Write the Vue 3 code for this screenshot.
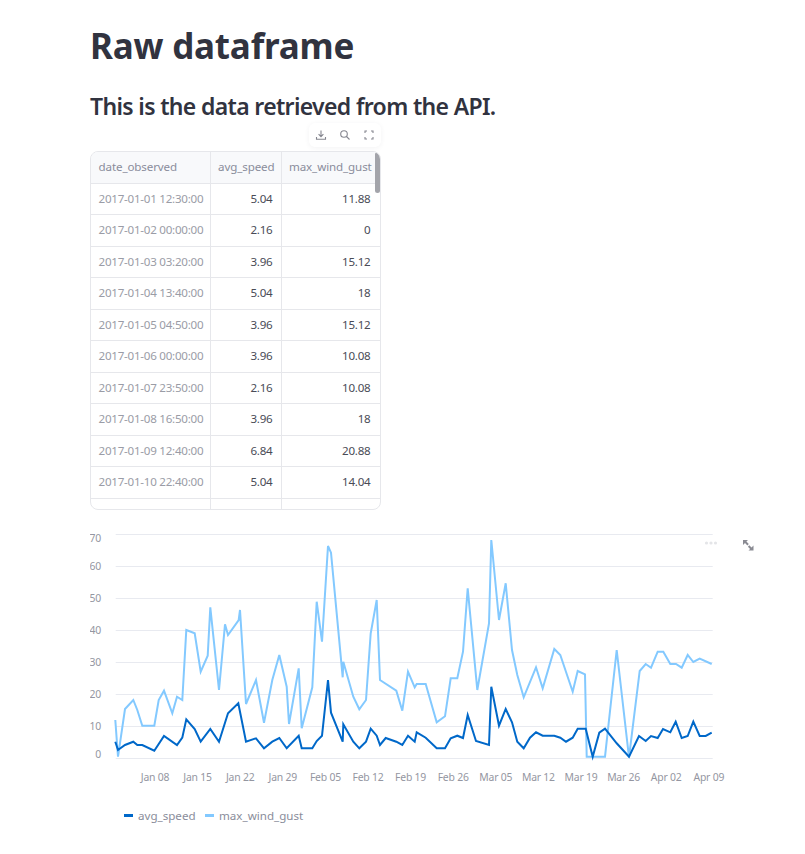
<script setup>
const rows = [
  ['2017-01-01 12:30:00', '5.04', '11.88'],
  ['2017-01-02 00:00:00', '2.16', '0'],
  ['2017-01-03 03:20:00', '3.96', '15.12'],
  ['2017-01-04 13:40:00', '5.04', '18'],
  ['2017-01-05 04:50:00', '3.96', '15.12'],
  ['2017-01-06 00:00:00', '3.96', '10.08'],
  ['2017-01-07 23:50:00', '2.16', '10.08'],
  ['2017-01-08 16:50:00', '3.96', '18'],
  ['2017-01-09 12:40:00', '6.84', '20.88'],
  ['2017-01-10 22:40:00', '5.04', '14.04'],
  ['', '', ''],
]

const yTicks = [70, 60, 50, 40, 30, 20, 10, 0]
const xTicks = ['Jan 08', 'Jan 15', 'Jan 22', 'Jan 29', 'Feb 05', 'Feb 12', 'Feb 19', 'Feb 26', 'Mar 05', 'Mar 12', 'Mar 19', 'Mar 26', 'Apr 02', 'Apr 09']

function gridY(v) {
  return 758 - v * 3.2
}

// first and last y labels are pulled inside the plot, as vega does
function labelY(v) {
  if (v === 70) return 542
  if (v === 0) return 757.5
  return gridY(v) + 4
}

// traced from the plot, in page pixels
const gust = '115.3,720 118,756.7 125,709 133.3,700 137.3,710 142.3,725.7 154.3,725.7 158.7,700 164,690.7 172.3,713.3 177,696.7 182.3,700 186.3,630 194.7,633.3 200.7,671.7 207.7,655.7 210.3,607.3 219,690 225,624.3 228,635 238.7,620 240,610 246,704 256,680 264,722.7 272.3,680 279.3,655 286.7,686.7 289,724 298.7,668.3 301.7,728.3 312.3,687.3 316.7,601.7 322,641.7 328,546 331,552.7 342.7,677.3 343.3,661.7 353.3,696.7 359.3,709.3 366,700 370.7,633.3 376.7,600 380,680 396.3,690.7 402.3,710.7 408,671.7 414.7,687.3 416.7,684 425.7,684 436.7,722.3 445,716.3 450.7,678.3 457.3,678.3 463,651.7 467.7,588.3 477.3,690 489,623.3 491.3,540 499,620 505.7,583.3 512,650 517.3,675 523.7,697.3 536,667.3 542.7,688.3 554.3,649 560.3,655 572.7,691.7 577.7,671 585,674.3 586.7,756.7 605,756.7 616.7,650 629,757.3 639.7,671 645.7,664 651,667.7 657.7,651.7 663.3,651.7 670.3,664 676,664 681.7,667.7 687.7,655 693.3,662 699.7,658.7 711.7,664'
const speed = '115.3,741.7 118,750 125,745 133.3,741.7 137.3,745 142.3,745 154.3,750.7 164,736 177,745 182.3,737.7 186.3,719.3 194.7,729 200.7,741.7 210.3,729 219,741.7 228,713.3 238.3,703.3 246,741.7 256,738.3 264,748.3 272.3,741.7 279.3,738 286.7,748.3 298.7,735.7 301.7,748.3 312.3,748.3 316.7,741 322,735.7 328,680 331,712.7 342.7,741.7 343.3,724.3 353.3,741.7 359.3,748.3 366,741.7 370.7,728.7 376.7,735.7 380,745 385.7,738 396.3,741.7 402.3,745 408,735.7 414.7,741.7 416.7,732.3 425.7,737.7 436.7,748.3 445,748.3 450.7,738.3 457.3,735.7 463,738 467.7,715 476,741 489,745 491.3,686.7 499,725.7 505.7,709 512,722.3 517.3,741.7 523.7,748.3 530,737.7 536,732.3 542.7,735.7 554.3,735.7 560.3,737.7 566,741.7 572.7,737.7 577.7,728.7 585.7,728.7 592.7,756.7 599.3,732.7 605,728.7 616.7,743.3 629,756.7 639,736 645.7,741 651,736 657.7,738 663,729 670.3,732.3 675.7,721.7 681.7,738 687.7,736 693.3,721.7 699.7,736 705.7,736 711.7,732.7'
</script>

<template>
  <div class="page">
    <h1 class="title">Raw dataframe</h1>
    <h2 class="subtitle">This is the data retrieved from the API.</h2>

    <div class="df">
      <div class="df-toolbar">
        <svg class="df-icon" viewBox="0 0 12 12"><path d="M6 1.5v6M3.6 5.2 6 7.6l2.4-2.4M1.5 8v2.3h9V8" /></svg>
        <svg class="df-icon" viewBox="0 0 12 12"><circle cx="5" cy="5" r="3.3" /><path d="m7.5 7.5 3 3" /></svg>
        <svg class="df-icon" viewBox="0 0 12 12"><path d="M2 4V2h2M8 2h2v2M10 8v2H8M4 10H2V8" /></svg>
      </div>
      <div class="df-table">
        <div class="df-row df-head">
          <div class="df-cell df-index">date_observed</div>
          <div class="df-cell df-num">avg_speed</div>
          <div class="df-cell df-num df-last">max_wind_gust</div>
        </div>
        <div v-for="(r, i) in rows" :key="i" class="df-row">
          <div class="df-cell df-index">{{ r[0] }}</div>
          <div class="df-cell df-num">{{ r[1] }}</div>
          <div class="df-cell df-num df-last">{{ r[2] }}</div>
        </div>
        <div class="df-scroll"></div>
      </div>
    </div>

    <svg class="chart" width="675" height="310" viewBox="90 525 675 310">
      <g v-for="v in yTicks" :key="v">
        <line x1="115.7" x2="712.7" :y1="gridY(v) + 0.5" :y2="gridY(v) + 0.5" class="grid" />
        <text x="101" :y="labelY(v)" text-anchor="end" class="tick">{{ v }}</text>
      </g>
      <text
        v-for="(t, i) in xTicks"
        :key="t"
        :x="155 + i * 42.6"
        y="781"
        text-anchor="middle"
        class="tick"
      >{{ t }}</text>

      <polyline :points="gust" class="line line-gust" />
      <polyline :points="speed" class="line line-speed" />

      <rect x="124" y="814" width="9" height="3" fill="#0068c9" />
      <text x="138" y="820" class="legend">avg_speed</text>
      <rect x="205" y="814" width="9" height="3" fill="#83c9ff" />
      <text x="219" y="820" class="legend">max_wind_gust</text>

      <g fill="#e4e5e8">
        <circle cx="706.5" cy="543" r="1.6" />
        <circle cx="711" cy="543" r="1.6" />
        <circle cx="715.5" cy="543" r="1.6" />
      </g>
      <g fill="#8a8b93">
        <path d="M743 540h5l-1.6 1.6 2.4 2.4-1.4 1.4-2.4-2.4-2 2z" />
        <path d="M753.5 550.5h-5l1.6-1.6-2.2-2.2 1.4-1.4 2.2 2.2 2-2z" />
      </g>
    </svg>
  </div>
</template>

<style scoped>
.page {
  padding: 24px 0 0 90px;
  font-family: "Noto Sans", sans-serif;
  color: #31333f;
}

.title {
  margin: 0;
  font-size: 35px;
  line-height: 44px;
  font-weight: 700;
  letter-spacing: -0.2px;
}

.subtitle {
  margin: 22px 0 0;
  font-size: 23px;
  line-height: 32px;
  font-weight: 600;
  letter-spacing: -0.66px;
}

.df {
  position: relative;
  width: 291px;
  margin-top: 29px;
}

.df-toolbar {
  position: absolute;
  top: -28px;
  right: 0;
  width: 72px;
  height: 24px;
  display: flex;
  align-items: center;
  justify-content: space-around;
  background: #fff;
  border-radius: 6px;
  box-shadow: 0 1px 5px rgba(49, 51, 63, 0.06);
}

.df-icon {
  width: 12px;
  height: 12px;
  fill: none;
  stroke: #85868f;
  stroke-width: 1.1;
}

.df-table {
  position: relative;
  height: 359px;
  box-sizing: border-box;
  border: 1px solid #e6e7eb;
  border-radius: 8px;
  overflow: hidden;
}

.df-row {
  display: grid;
  grid-template-columns: 119.5px 71px 1fr;
  height: 31.5px;
  box-sizing: border-box;
  border-bottom: 1px solid #e6e7eb;
  font-size: 11.6px;
  letter-spacing: -0.25px;
  line-height: 30px;
  color: #494b56;
}

.df-head {
  background: #f8f9fb;
  letter-spacing: -0.12px;
}

.df-cell {
  padding: 0 8px 0 7.5px;
  border-right: 1px solid #e6e7eb;
  white-space: nowrap;
  overflow: hidden;
}

.df-index {
  color: #9a9ca6;
}

.df-num {
  text-align: right;
}

.df-last {
  border-right: none;
  padding-right: 9.5px;
}

.df-head .df-cell {
  color: #8a8d9b;
}

.df-scroll {
  position: absolute;
  top: 0;
  right: 0;
  width: 5px;
  height: 41px;
  background: #a3a4aa;
  border-radius: 3px;
}

.chart {
  display: block;
  margin-top: 15px;
}

.grid {
  stroke: #e8eaf0;
  stroke-width: 1;
}

.tick {
  font-size: 10.4px;
  letter-spacing: -0.2px;
  fill: #9496a1;
}

.legend {
  font-size: 11.6px;
  letter-spacing: 0;
  fill: #8a8d9b;
}

.line {
  fill: none;
  stroke-width: 2;
  stroke-linejoin: miter;
}

.line-gust {
  stroke: #83c9ff;
}

.line-speed {
  stroke: #0068c9;
}
</style>
